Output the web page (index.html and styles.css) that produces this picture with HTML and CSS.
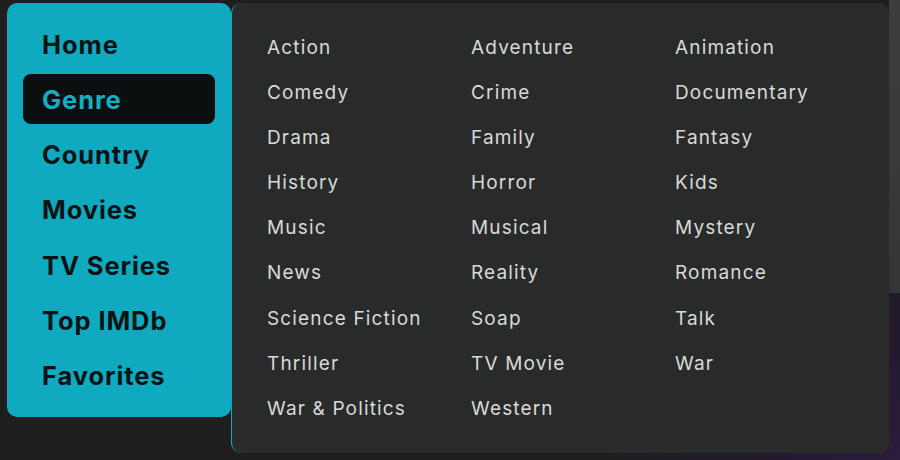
FILE: index.html
```html
<!DOCTYPE html>
<html lang="en">
<head>
<meta charset="utf-8">
<title>Genre menu</title>
<link rel="stylesheet" href="styles.css">
</head>
<body>
<div class="wrap">
  <nav class="sidebar">
    <a class="nav-item">Home</a>
    <a class="nav-item active">Genre</a>
    <a class="nav-item">Country</a>
    <a class="nav-item">Movies</a>
    <a class="nav-item">TV Series</a>
    <a class="nav-item">Top IMDb</a>
    <a class="nav-item">Favorites</a>
  </nav>
  <div class="panel">
    <a class="genre">Action</a>
    <a class="genre">Adventure</a>
    <a class="genre">Animation</a>
    <a class="genre">Comedy</a>
    <a class="genre">Crime</a>
    <a class="genre">Documentary</a>
    <a class="genre">Drama</a>
    <a class="genre">Family</a>
    <a class="genre">Fantasy</a>
    <a class="genre">History</a>
    <a class="genre">Horror</a>
    <a class="genre">Kids</a>
    <a class="genre">Music</a>
    <a class="genre">Musical</a>
    <a class="genre">Mystery</a>
    <a class="genre">News</a>
    <a class="genre">Reality</a>
    <a class="genre">Romance</a>
    <a class="genre">Science Fiction</a>
    <a class="genre">Soap</a>
    <a class="genre">Talk</a>
    <a class="genre">Thriller</a>
    <a class="genre">TV Movie</a>
    <a class="genre">War</a>
    <a class="genre">War &amp; Politics</a>
    <a class="genre">Western</a>
  </div>
</div>
</body>
</html>
```
FILE: styles.css
```css
html, body {
  margin: 0;
  height: 100%;
}
body {
  font-family: Inter, "Open Sans", "Liberation Sans", sans-serif;
  background:
    linear-gradient(180deg, #3c3d3d, #343535) right top / 11px 293px no-repeat,
    radial-gradient(ellipse 300px 260px at 100% 100%, #2a1c3c 0%, #231a2e 45%, rgba(30,30,30,0) 100%),
    #1e1e1e;
  overflow: hidden;
}
.wrap {
  display: flex;
  align-items: flex-start;
  padding: 3px 11px 0 7px;
}
.sidebar {
  width: 224px;
  box-sizing: border-box;
  background: #0faac0;
  border-radius: 10px;
  padding: 16px;
  display: flex;
  flex-direction: column;
  gap: 5.33px;
}
.nav-item {
  display: flex;
  align-items: center;
  height: 50px;
  padding-left: 19px;
  border-radius: 8px;
  font-size: 25.5px;
  font-weight: 700;
  color: #0a1214;
  letter-spacing: 0.9px;
}
.nav-item.active {
  background: #0c0f10;
  color: #14aec4;
}
.panel {
  width: 658px;
  height: 450px;
  box-sizing: border-box;
  background: #292b2a;
  border-left: 1px solid #13a6bb;
  border-radius: 10px;
  padding: 22px 10px 0 35px;
  display: grid;
  grid-template-columns: repeat(3, 204px);
  grid-auto-rows: 45.1px;
  align-content: start;
}
.genre {
  font-size: 19px;
  color: #d9d9d9;
  letter-spacing: 1.15px;
  line-height: 45px;
  height: 45px;
}
```
